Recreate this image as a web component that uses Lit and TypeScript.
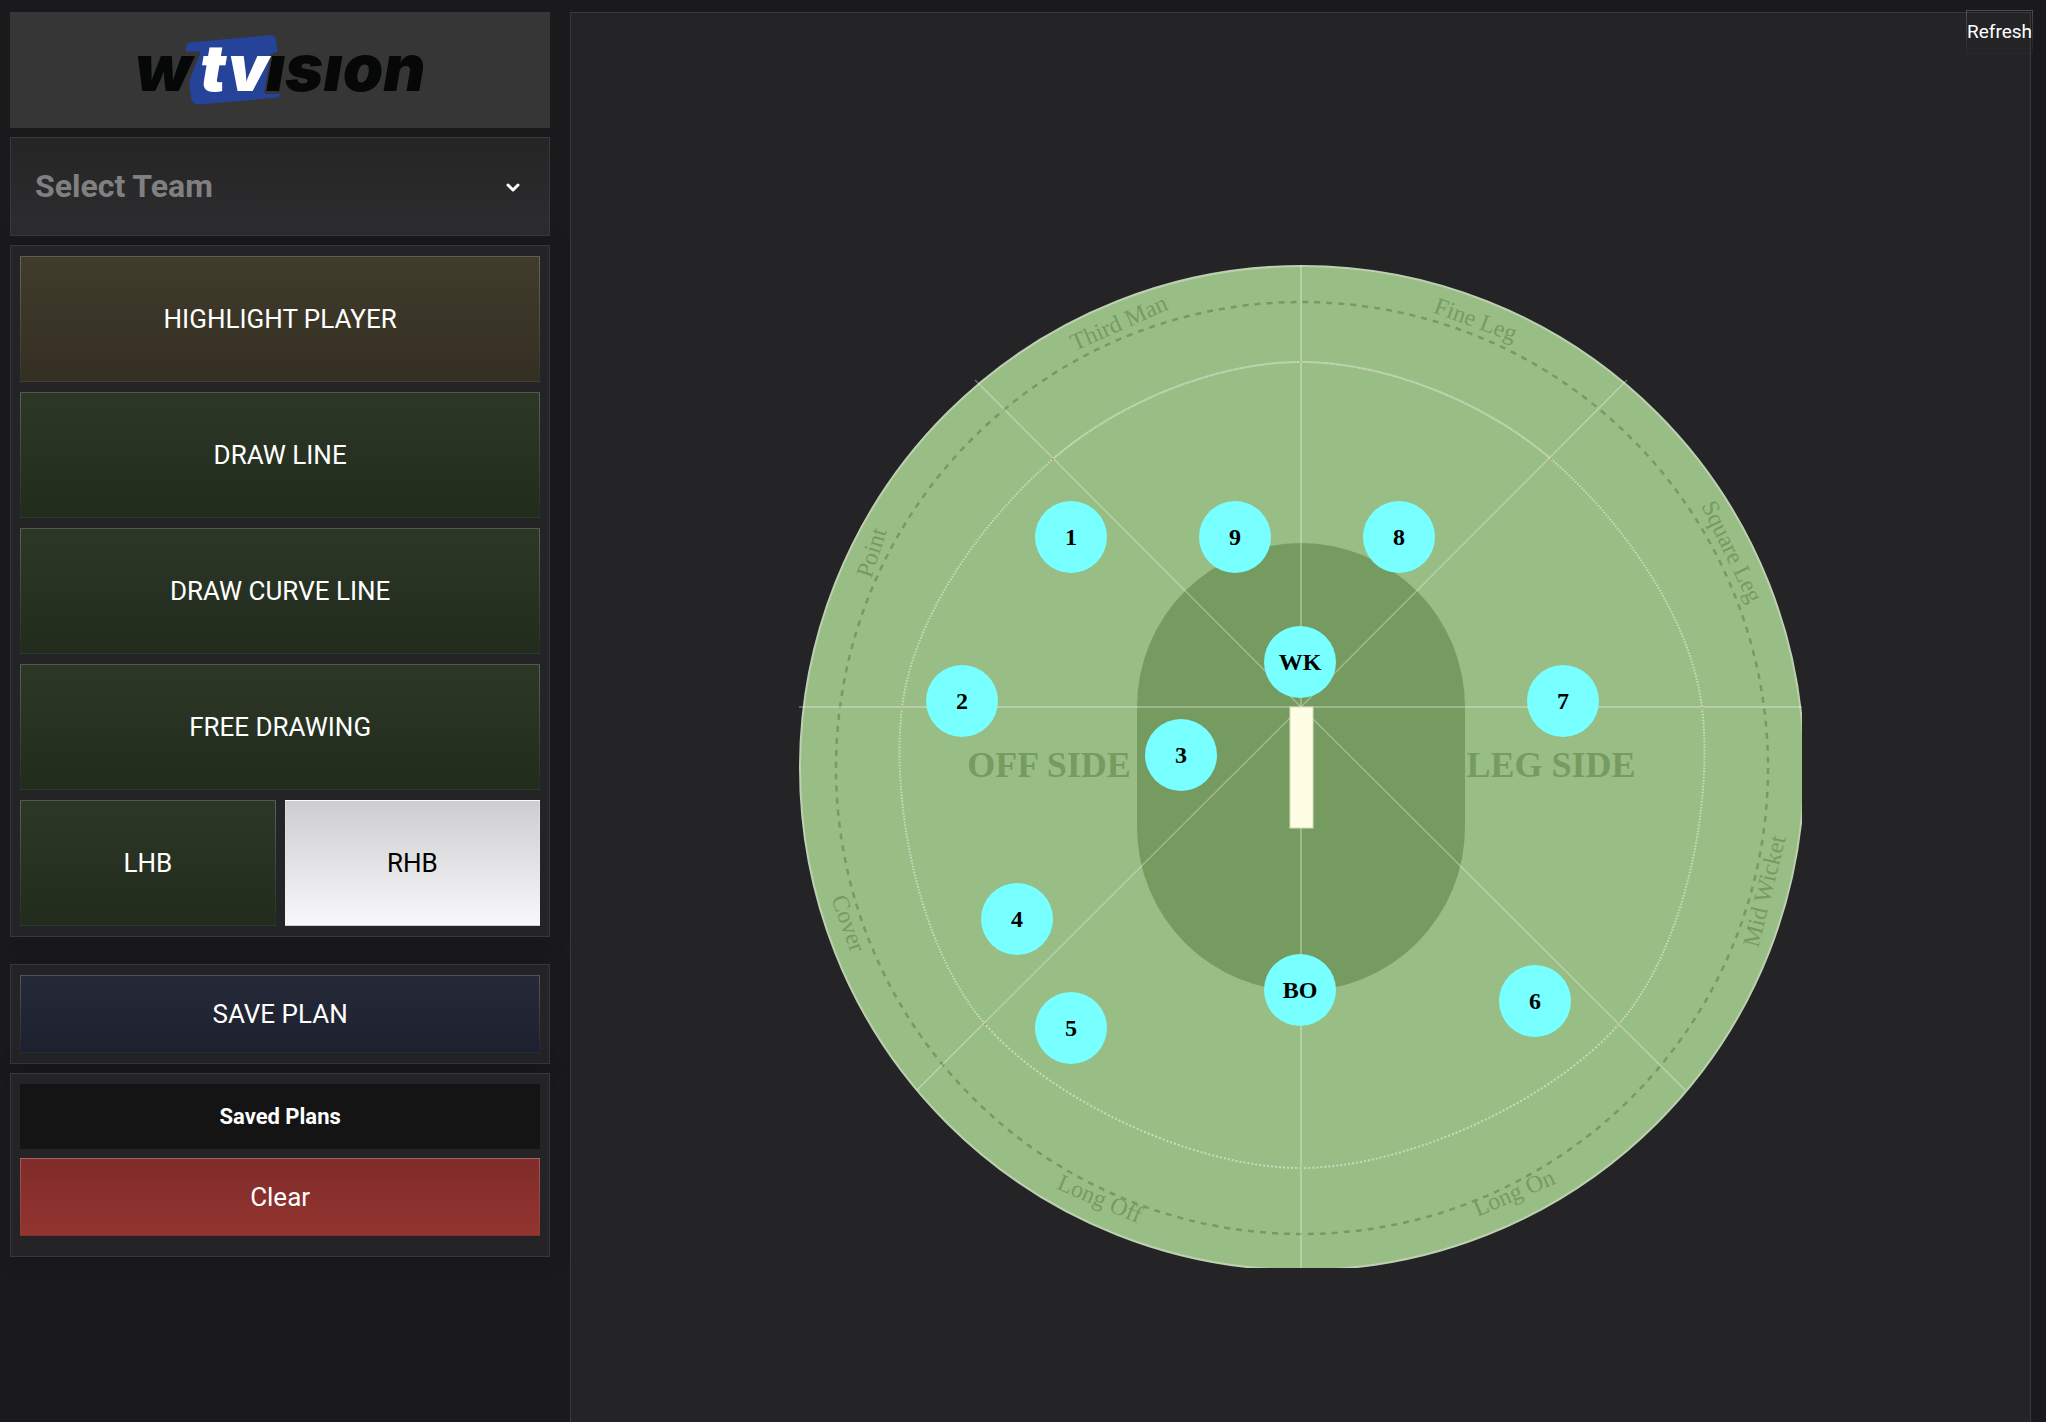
import { LitElement, html, svg, css } from "lit";
import { customElement, state } from "lit/decorators.js";
import { classMap } from "lit/directives/class-map.js";

type Point = [number, number];

interface FieldLabel {
  text: string;
  x: number;
  y: number;
  angle: number;
}

interface Player {
  id: string;
  x: number;
  y: number;
}

const CENTER: Point = [502, 442];

const SECTOR_ENDS: Point[] = [
  [176, 115],
  [828, 115],
  [886, 825],
  [118, 825],
];

/* Points where the sector lines meet the inner ring, clockwise from the top. */
const RING: Point[] = [
  [502, 97],
  [752, 194],
  [903, 443],
  [820, 759],
  [502, 903],
  [186, 759],
  [103, 443],
  [254, 194],
];

/* Dot density of each ring segment, clockwise from the top. */
const RING_DENSITY = ["dense", "medium", "medium", "sparse", "sparse", "medium", "medium", "dense"];

const LABELS: FieldLabel[] = [
  { text: "Third Man", x: 323, y: 65, angle: -24 },
  { text: "Fine Leg", x: 674, y: 62, angle: 20 },
  { text: "Square Leg", x: 926, y: 290, angle: 64 },
  { text: "Mid Wicket", x: 973, y: 628, angle: -76 },
  { text: "Long On", x: 718, y: 935, angle: -23 },
  { text: "Long Off", x: 298, y: 941, angle: 23 },
  { text: "Cover", x: 42, y: 661, angle: 70 },
  { text: "Point", x: 80, y: 290, angle: -72 },
];

const PLAYERS: Player[] = [
  { id: "1", x: 272, y: 272 },
  { id: "9", x: 436, y: 272 },
  { id: "8", x: 600, y: 272 },
  { id: "WK", x: 501, y: 397 },
  { id: "2", x: 163, y: 436 },
  { id: "7", x: 764, y: 436 },
  { id: "3", x: 382, y: 490 },
  { id: "4", x: 218, y: 654 },
  { id: "5", x: 272, y: 763 },
  { id: "BO", x: 501, y: 725 },
  { id: "6", x: 736, y: 736 },
];

/* Cubic segments of the closed Catmull-Rom spline through the given points. */
function ringSegments(points: Point[]): string[] {
  const n = points.length;
  const at = (i: number) => points[(i + n) % n];
  return points.map((b, i) => {
    const [a, c, e] = [at(i - 1), at(i + 1), at(i + 2)];
    const c1 = `${b[0] + (c[0] - a[0]) / 6} ${b[1] + (c[1] - a[1]) / 6}`;
    const c2 = `${c[0] - (e[0] - b[0]) / 6} ${c[1] - (e[1] - b[1]) / 6}`;
    return `M${b[0]} ${b[1]} C${c1} ${c2} ${c[0]} ${c[1]}`;
  });
}

@customElement("cricket-field")
export class CricketField extends LitElement {
  static styles = css`
    :host {
      display: block;
    }
    .field {
      display: block;
      width: 100%;
      height: auto;
      font-family: "Liberation Serif", "Times New Roman", serif;
    }
    .grass {
      fill: #99be85;
      stroke: #bdd0b1;
      stroke-width: 2;
    }
    .inner {
      fill: #769b61;
    }
    .boundary {
      fill: none;
      stroke: #769b61;
      stroke-width: 2.5;
      stroke-dasharray: 6 6;
    }
    .ring {
      fill: none;
      stroke: #ffffff;
      stroke-opacity: 0.45;
      stroke-width: 2;
    }
    .dense {
      stroke-opacity: 0.4;
      stroke-dasharray: 2 0.5;
    }
    .medium {
      stroke-dasharray: 1.5 1.5;
    }
    .sparse {
      stroke-dasharray: 2 2;
    }
    .ring-mark {
      fill: #e0482f;
    }
    .axis {
      stroke: #ffffff;
      stroke-opacity: 0.28;
      stroke-width: 2;
    }
    .sector {
      stroke: #ffffff;
      stroke-opacity: 0.36;
      stroke-width: 1.2;
    }
    .pitch {
      fill: #fffee5;
      stroke: #d5ddbd;
      stroke-width: 1;
    }
    .label,
    .side {
      fill: #769b61;
      text-anchor: middle;
    }
    .label {
      font-size: 24px;
    }
    .side {
      font-size: 36px;
      font-weight: 700;
    }
    .dot {
      fill: #78ffff;
    }
    .player-name {
      font-size: 24px;
      font-weight: 700;
      text-anchor: middle;
      fill: #000000;
    }
  `;

  render() {
    return html`
      <svg class="field" viewBox="0 0 1003 1003" role="img" aria-label="Field">
        <circle class="grass" cx="503" cy="503" r="502"></circle>
        <path class="inner" d="M338 442 A164 164 0 0 1 666 442 V562 A164 164 0 0 1 338 562 Z"></path>
        <circle class="boundary" cx="503" cy="503" r="466"></circle>
        ${ringSegments(RING).map((d, i) => svg`<path class=${`ring ${RING_DENSITY[i]}`} d=${d}></path>`)}
        <line class="axis" x1="0" y1=${CENTER[1]} x2="1003" y2=${CENTER[1]}></line>
        <line class="axis" x1=${CENTER[0]} y1="0" x2=${CENTER[0]} y2="1003"></line>
        ${SECTOR_ENDS.map(
          ([x, y]) => svg`<line class="sector" x1=${CENTER[0]} y1=${CENTER[1]} x2=${x} y2=${y}></line>`
        )}
        ${RING.map(([x, y]) => svg`<circle class="ring-mark" cx=${x} cy=${y} r="0.7"></circle>`)}
        <rect class="pitch" x="491" y="442" width="23" height="121"></rect>
        <text class="side" x="250" y="512">OFF SIDE</text>
        <text class="side" x="752" y="512">LEG SIDE</text>
        ${LABELS.map(
          (l) => svg`<text class="label" transform=${`translate(${l.x} ${l.y}) rotate(${l.angle})`}>${l.text}</text>`
        )}
        ${PLAYERS.map(
          (p) => svg`<g transform=${`translate(${p.x} ${p.y})`}>
            <circle class="dot" r="36"></circle>
            <text class="player-name" y="8">${p.id}</text>
          </g>`
        )}
      </svg>
    `;
  }
}

@customElement("app-root")
export class AppRoot extends LitElement {
  static styles = css`
    :host {
      display: block;
      background: #1a1a1c;
      color: #ffffff;
      font-family: Roboto, "Liberation Sans", sans-serif;
    }
    * {
      box-sizing: border-box;
    }
    .page {
      display: grid;
      grid-template-columns: 27fr 73fr;
      column-gap: 20px;
      min-height: 100vh;
      padding: 12px 15px 0 10px;
    }
    .sidebar {
      display: flex;
      flex-direction: column;
      gap: 9px;
    }
    .brand {
      display: flex;
      justify-content: center;
      padding: 8px;
      background: #363636;
    }
    .logo {
      width: 320px;
      height: 100px;
    }
    .logo-plate {
      fill: #26439a;
    }
    .logo-text {
      font-family: Inter, "Liberation Sans", sans-serif;
      font-size: 65px;
      font-style: italic;
      font-weight: 900;
      fill: #060807;
      stroke: #363636;
      stroke-width: 4;
      paint-order: stroke;
    }
    .logo-accent {
      fill: #ffffff;
      stroke: none;
    }
    .team {
      display: grid;
      align-items: center;
      border: 1px solid #39393b;
      background: linear-gradient(#252526, #2d2d2f);
    }
    .team-select,
    .team-chevron {
      grid-area: 1 / 1;
    }
    .team-select {
      width: 100%;
      height: 97px;
      padding: 0 60px 2px 24px;
      border: 0;
      border-radius: 0;
      appearance: none;
      background: transparent;
      color: #808080;
      font: 700 32px/40px Roboto, "Liberation Sans", sans-serif;
    }
    .team-chevron {
      justify-self: end;
      width: 20px;
      height: 20px;
      margin-right: 26px;
      fill: none;
      stroke: #ffffff;
      stroke-width: 3;
      stroke-linecap: round;
      stroke-linejoin: round;
      pointer-events: none;
    }
    .panel {
      display: grid;
      gap: 10px 9px;
      padding: 10px 9px;
      border: 1px solid #373739;
      background: #242426;
      box-shadow: 0 0 24px rgba(0, 0, 0, 0.15);
    }
    .tools {
      grid-template-columns: 1fr 1fr;
      margin-bottom: 18px;
    }
    .plans {
      row-gap: 9px;
      padding-bottom: 20px;
    }
    .plans-title {
      margin: 0;
      background: #141414;
      font-size: 22px;
      font-weight: 700;
      line-height: 65px;
      text-align: center;
    }
    .btn {
      height: 78px;
      padding: 0;
      border: 1px solid transparent;
      border-image: linear-gradient(rgba(255, 255, 255, 0.22), rgba(255, 255, 255, 0.02)) 1;
      color: #ffffff;
      font: 400 26px/32px Roboto, "Liberation Sans", sans-serif;
    }
    .tool {
      height: 126px;
      background: linear-gradient(#2c3728, #212c1c);
    }
    .wide {
      grid-column: 1 / -1;
    }
    .highlight {
      background: linear-gradient(#403c2b, #342f23);
    }
    .selected {
      background: linear-gradient(#cdcdcf, #f8f8fa);
      color: #000000;
    }
    .save {
      background: linear-gradient(#262a38, #1d202e);
    }
    .clear {
      background: linear-gradient(#7f2c2a, #93342f);
    }
    .board {
      display: flex;
      justify-content: center;
      align-items: flex-start;
      padding-top: 252px;
      border: 1px solid #39393b;
      border-bottom: 0;
      background: #242426;
    }
    .board-field {
      width: min(100%, 1003px);
    }
    .refresh {
      position: absolute;
      top: 10px;
      right: 13px;
      height: 44px;
      background: transparent;
      font-size: 19px;
    }
  `;

  @state() private hand = "RHB";

  private readonly tools = ["HIGHLIGHT PLAYER", "DRAW LINE", "DRAW CURVE LINE", "FREE DRAWING"];

  render() {
    return html`
      <div class="page">
        <aside class="sidebar">
          <div class="brand">
            <svg class="logo" viewBox="0 0 320 100" role="img" aria-label="wtvision">
              <path
                class="logo-plate"
                d="M66 31.500 V27 Q66.500 23 71 22.300 L150 15.300 Q155 15.200 156 19.500 L157.500 32 H153.500 L145.500 74 H161 L160 76 Q159 77.500 156 77.700 L79 84.400 Q73.500 84.500 71.500 79.500 Q69.500 70 69.500 60 L81 31.500 Z"
              ></path>
              <text class="logo-text" x="15" y="71">w</text>
              <text class="logo-text" x="146" y="71">ısıon</text>
              <text class="logo-text logo-accent" x="80" y="71">tv</text>
            </svg>
          </div>

          <div class="team">
            <select class="team-select" aria-label="Select Team">
              <option>Select Team</option>
            </select>
            <svg class="team-chevron" viewBox="0 0 20 20" aria-hidden="true">
              <path d="M5 8 L10 13 L15 8"></path>
            </svg>
          </div>

          <div class="panel tools">
            ${this.tools.map(
              (name, i) => html`<button type="button" class=${classMap({ btn: true, tool: true, wide: true, highlight: i === 0 })}>${name}</button>`
            )}
            ${["LHB", "RHB"].map(
              (name) => html`<button
                type="button"
                class=${classMap({ btn: true, tool: true, selected: this.hand === name })}
                aria-pressed=${this.hand === name}
                @click=${() => (this.hand = name)}
              >${name}</button>`
            )}
          </div>

          <div class="panel">
            <button type="button" class="btn save">SAVE PLAN</button>
          </div>

          <div class="panel plans">
            <h2 class="plans-title">Saved Plans</h2>
            <button type="button" class="btn clear">Clear</button>
          </div>
        </aside>

        <main class="board">
          <cricket-field class="board-field"></cricket-field>
        </main>
      </div>
      <button type="button" class="btn refresh">Refresh</button>
    `;
  }
}
